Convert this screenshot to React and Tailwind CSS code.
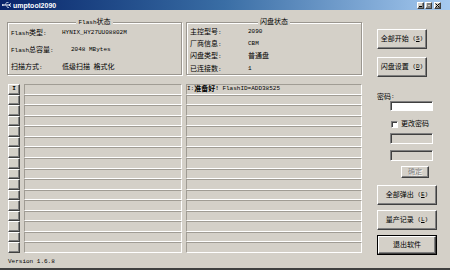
const FONT = "font-['Liberation_Mono','Noto_Sans_CJK_SC',monospace]";
const CJK = /[\u3000-\u9fff\uff00-\uffef]/;

// 中文 7px / 西文 6px, 模拟缩小后的宋体
function Mix({ text }) {
  const parts = text.match(/[\u3000-\u9fff\uff00-\uffef]+|[^\u3000-\u9fff\uff00-\uffef]+/g) || [];
  return parts.map((p, i) =>
    CJK.test(p) ? (
      <span key={i} className="text-[7px]">{p}</span>
    ) : (
      <span key={i} className="text-[6px] whitespace-pre">{p}</span>
    )
  );
}

const raised =
  "border border-t-white border-l-white border-r-[#404040] border-b-[#404040] shadow-[inset_-1px_-1px_0_#808080] bg-[#d4d0c8]";
const sunken =
  "border border-t-[#808080] border-l-[#808080] border-r-white border-b-white shadow-[inset_1px_1px_0_#404040]";
const cell =
  "border border-t-[#a09c94] border-l-[#a09c94] border-r-white border-b-white";

function Btn({ label, hot, className = "" }) {
  return (
    <div className={`${raised} flex items-center justify-center leading-none ${className}`}>
      <Mix text={label} />
      {hot && (
        <span className="text-[6px] whitespace-pre">
          {" ("}
          <span className="underline">{hot}</span>
          {")"}
        </span>
      )}
    </div>
  );
}

function GroupBox({ title, width, children, className = "" }) {
  return (
    <div
      className={`relative h-[53px] border border-[#9a968f] shadow-[inset_1px_1px_0_#fff,1px_1px_0_#fff] ${width} ${className}`}
    >
      <div className="absolute -top-[5px] left-0 right-0 flex justify-center">
        <span className="bg-[#d4d0c8] px-[2px] h-[9px] flex items-center">
          <Mix text={title} />
        </span>
      </div>
      {children}
    </div>
  );
}

function Row({ label, value, h, valueX }) {
  return (
    <div className={`flex items-center ${h}`}>
      <span className="w-[51px] pl-[3px] shrink-0">
        <Mix text={label} />
      </span>
      <span className={valueX}>
        <Mix text={value} />
      </span>
    </div>
  );
}

export default function App() {
  const rows = Array.from({ length: 16 }, (_, i) => i);
  return (
    <div
      className={`w-[450px] h-[270px] bg-[#d4d0c8] overflow-hidden flex flex-col border-b-2 border-[#404040] text-black text-[6px] leading-none ${FONT}`}
    >
      {/* 标题栏 */}
      <div className="h-[10px] shrink-0 bg-linear-to-r from-[#0a246a] via-[#3a6ea5] to-[#a6caf0] flex items-center">
        <svg width="10" height="8" viewBox="0 0 10 8" className="ml-[2px]">
          <path d="M0 4h7M7 4l2-1.5M7 4l2 1.5" stroke="#fff" strokeWidth="1" fill="none" />
          <path d="M3 4l1.5-2.5h2M4.5 4.5l1 2h1.5" stroke="#cfd8e8" strokeWidth="0.8" fill="none" />
          <circle cx="0.8" cy="4" r="0.8" fill="#fff" />
        </svg>
        <span className="ml-[1px] text-[7px] font-bold text-white font-['Liberation_Sans',sans-serif]">
          umptool2090
        </span>
        <div className="ml-auto mr-[9px] flex items-center">
          <div className={`${raised} w-[7px] h-[7px] relative`}>
            <div className="absolute left-[1px] bottom-[1px] w-[3px] h-[1px] bg-black" />
          </div>
          <div className={`${raised} w-[7px] h-[7px] ml-[1px] flex items-center justify-center`}>
            <div className="w-[4px] h-[4px] border border-t-2 border-[#808080]" />
          </div>
          <div className={`${raised} w-[7px] h-[7px] ml-[2px] flex items-center justify-center`}>
            <svg width="5" height="5" viewBox="0 0 5 5">
              <path d="M0.5 0.5l4 4M4.5 0.5l-4 4" stroke="#000" strokeWidth="1" />
            </svg>
          </div>
        </div>
      </div>

      {/* 主体 */}
      <div className="flex pl-[7px] shrink-0">
        <div className="w-[355px] flex flex-col">
          <div className="mt-[12px] flex gap-[4px]">
            <GroupBox title="Flash状态" width="w-[175px]">
              <div className="pt-[5px] flex flex-col gap-[7px]">
                <Row label="Flash类型:" value="HYNIX_HY27UU08802M" h="h-[10px]" valueX="pl-[3px]" />
                <Row label="Flash总容量:" value="2048 MBytes" h="h-[10px]" valueX="pl-[12px]" />
                <Row label="扫描方式:" value="低级扫描 格式化" h="h-[10px]" valueX="pl-[3px]" />
              </div>
            </GroupBox>
            <GroupBox title="闪盘状态" width="w-[176px]">
              <div className="pt-[3px] flex flex-col">
                <Row label="主控型号:" value="2090" h="h-[12.3px]" valueX="pl-[10px]" />
                <Row label="厂商信息:" value="CBM" h="h-[12.3px]" valueX="pl-[10px]" />
                <Row label="闪盘类型:" value="普通盘" h="h-[12.3px]" valueX="pl-[10px]" />
                <Row label="已连接数:" value="1" h="h-[12.3px]" valueX="pl-[10px]" />
              </div>
            </GroupBox>
          </div>

          {/* 列表 */}
          <div className="mt-[9px] h-[169px] flex flex-col">
            {rows.map((i) => (
              <div key={i} className="flex-1 flex gap-[4px] pl-[1px]">
                <div className={`${raised} w-[12px] flex items-center justify-center`}>
                  {i === 0 && <span className="text-[6px] font-bold">I</span>}
                </div>
                <div className={`${cell} w-[158px]`} />
                <div className={`${cell} w-[176px] flex items-center`}>
                  {i === 0 && (
                    <>
                      <span className="text-[6px]">I:</span>
                      <span className="text-[7px] font-bold">准备好</span>
                      <span className="text-[6px] font-bold whitespace-pre">! </span>
                      <span className="text-[6px]">FlashID=ADD38525</span>
                    </>
                  )}
                </div>
              </div>
            ))}
          </div>
        </div>

        {/* 右侧按钮 */}
        <div className="ml-[15px] w-[60px] flex flex-col">
          <Btn label="全部开始" hot="S" className="mt-[19px] w-[50px] h-[20px]" />
          <Btn label="闪盘设置" hot="D" className="mt-[8px] w-[50px] h-[20px]" />
          <div className="mt-[16px] h-[8px] flex items-center">
            <Mix text="密码:" />
          </div>
          <div className={`${sunken} bg-white ml-[13px] w-[43px] h-[10px]`} />
          <div className="mt-[10px] h-[7px] flex items-center">
            <div className={`${sunken} bg-white ml-[14px] w-[7px] h-[7px]`} />
            <span className="ml-[3px]">
              <Mix text="更改密码" />
            </span>
          </div>
          <div className={`${sunken} ml-[13px] mt-[5px] w-[43px] h-[11px]`} />
          <div className={`${sunken} ml-[13px] mt-[6px] w-[43px] h-[11px]`} />
          <div
            className={`${raised} ml-[24px] mt-[5px] w-[28px] h-[12px] flex items-center justify-center text-[#808080] [text-shadow:1px_1px_0_#fff]`}
          >
            <span className="text-[7px]">确定</span>
          </div>
          <Btn label="全部弹出" hot="E" className="mt-[7px] w-[60px] h-[20px]" />
          <Btn label="量产记录" hot="L" className="mt-[5px] w-[60px] h-[20px]" />
          <div className="mt-[5px] w-[60px] h-[20px] border border-black flex">
            <Btn label="退出软件" className="flex-1" />
          </div>
        </div>
      </div>

      {/* 版本 */}
      <div className="pl-[8px] mt-[4px]">
        <span className="text-[6px]">Version 1.6.8</span>
      </div>
    </div>
  );
}
